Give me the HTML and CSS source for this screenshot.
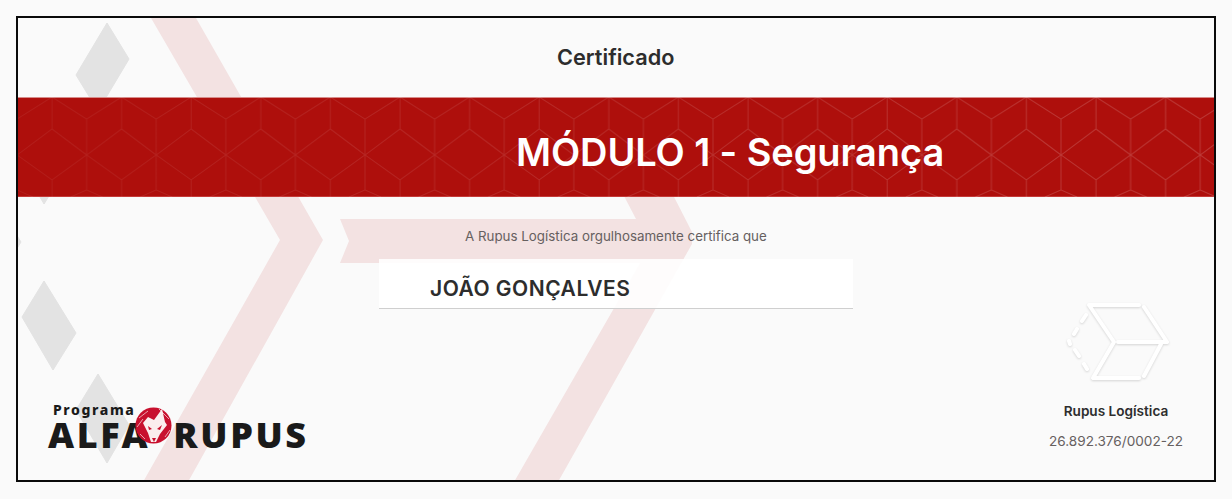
FILE: index.html
```html
<!DOCTYPE html>
<html lang="pt-BR">
<head>
    <meta charset="UTF-8">
    <meta name="viewport" content="width=device-width, initial-scale=1.0">
    <title>Certificado</title>
    <link rel="stylesheet" href="styles.css">
</head>
<body>
    <div class="certificate">
        <!-- Formas de fundo -->
        <svg class="backdrop" width="1196" height="462" viewBox="18 18 1196 462">
            <g fill="#e3e3e3" stroke="#e3e3e3" stroke-width="1" stroke-linejoin="round">
                <polygon points="107,23 129,59 98,111 76,75"/>
                <polygon points="35,115 67,167 44,204 13,151"/>
                <polygon points="44,281 76,333 53,370 22,317"/>
                <polygon points="98,374 129,425 107,463 76,410"/>
                <polygon points="-11,190 21,242 -2,279 -33,227"/>
            </g>
            <g fill="#f3e2e2">
                <polygon points="151,18 196,18 323,240 188,482 143,482 280,240"/>
                <polygon points="340,219 636,219 600,150 650,150 692,232 692,244 558,482 514,482 640,263 340,263 349,241"/>
            </g>
        </svg>

        <header class="heading">Certificado</header>

        <div class="banner">
            <svg class="banner-lines" width="1200" height="100">
                <defs>
                    <pattern id="hexes" x="1" width="69.6" height="100" patternUnits="userSpaceOnUse">
                        <path d="M35 0V32L0 58M35 32L69.6 58M35 0L0 22M35 0L69.6 22M0 22V93M69.6 22V93M0 58L35 83L69.6 58M35 83V100M0 93L16 100M69.6 93L53.6 100" fill="none" stroke="#fff" stroke-width="1"/>
                    </pattern>
                    <linearGradient id="fade">
                        <stop offset="0" stop-color="#fff" stop-opacity="0.06"/>
                        <stop offset="1" stop-color="#fff" stop-opacity="0.18"/>
                    </linearGradient>
                    <mask id="fadeMask">
                        <rect width="1200" height="100" fill="url(#fade)"/>
                    </mask>
                </defs>
                <rect width="1200" height="100" fill="url(#hexes)" mask="url(#fadeMask)"/>
            </svg>
            <h1 class="banner-title">MÓDULO 1 - Segurança</h1>
        </div>

        <div class="recipient">
            <p class="lead">A Rupus Logística orgulhosamente certifica que</p>
            <div class="name-box">JOÃO GONÇALVES</div>
        </div>

        <footer class="footer">
            <div class="program">
                <div class="program-small">Programa</div>
                <div class="program-big"><span>ALFA</span><span>RUPUS</span></div>
                <svg class="wolf" width="37" height="37" viewBox="0 0 37 37">
                    <circle cx="18.5" cy="18.5" r="18" fill="#c8102e"/>
                    <path d="M4 11L13 4M2 20L8 12M24 2L34 12M30 30L35 23M5 27L10 32" stroke="#eaa4ae" stroke-width="1" fill="none"/>
                    <path d="M8 16L13 10L19 13L27 2L30 15L32 18L25 27L21 35H16L13 26Z" fill="#fbeeee"/>
                    <path d="M13 19L17 22L14 23ZM27 18L22 22L25 23ZM17 31H21L19 35Z" fill="#c8102e"/>
                </svg>
            </div>
            <div class="company">
                <svg class="cube" width="110" height="85" viewBox="0 0 110 85">
                    <g fill="none" stroke="#fff" stroke-width="4" stroke-linecap="round" stroke-linejoin="round">
                        <path d="M78 5H28L53 42L32 78H78"/>
                        <path d="M83 7L106 42H57M100 44L83 76"/>
                        <path d="M25 15L21 21M16 29L13 34M8 41L9 44M14 50L18 56M23 64L26 69"/>
                    </g>
                </svg>
                <div class="company-name">Rupus Logística</div>
                <div class="company-id">26.892.376/0002-22</div>
            </div>
        </footer>
    </div>
</body>
</html>
```

FILE: styles.css
```css
body {
    margin: 0;
    background: #fafafa;
    font-family: 'Inter', 'Liberation Sans', sans-serif;
    color: #2d2d2d;
}

.certificate {
    position: relative;
    box-sizing: border-box;
    width: 1200px;
    height: 466px;
    margin: 16px;
    border: 2px solid #0a0a0a;
    overflow: hidden;
    display: flex;
    flex-direction: column;
}

.backdrop {
    position: absolute;
    top: 0;
    left: 0;
}

.heading {
    position: relative;
    flex-shrink: 0;
    height: 79px;
    box-sizing: border-box;
    padding: 27px 0 0 539px;
    font-size: 21.7px;
    line-height: 24px;
    font-weight: 600;
}

.banner {
    position: relative;
    flex-shrink: 0;
    box-sizing: border-box;
    height: 100px;
    margin: 0 -2px;
    padding-top: 10px;
    background: #ae0f0c;
    border-top: 1px solid #d78c8a;
    border-bottom: 1px solid #c53a38;
    display: flex;
    align-items: center;
}

.banner-lines {
    position: absolute;
    top: -1px;
    left: 0;
}

.banner-title {
    position: relative;
    margin: 0 0 0 500px;
    color: #fff;
    font-size: 38px;
    line-height: 46px;
    font-weight: 600;
    letter-spacing: -0.1px;
}

.recipient {
    position: relative;
    flex-shrink: 0;
    display: flex;
    flex-direction: column;
}

.lead {
    margin: 30px 0 0 447px;
    font-size: 13.35px;
    line-height: 18px;
    color: #66605f;
}

.name-box {
    box-sizing: border-box;
    width: 474px;
    height: 50px;
    margin: 14px 0 0 361px;
    padding-left: 51px;
    background: rgba(255, 255, 255, 0.9);
    border-bottom: 1px solid #cfcfcf;
    font-size: 21px;
    line-height: 59px;
    font-weight: 600;
    letter-spacing: 0.5px;
}

.footer {
    position: relative;
    flex: 1;
    display: flex;
    justify-content: space-between;
    align-items: flex-end;
    margin-top: -10px;
    padding: 0 28px 27px 30px;
}

.program {
    position: relative;
    margin-bottom: 1px;
    color: #1a1a1a;
    font-family: 'Noto Sans', sans-serif;
    font-weight: 900;
}

.program-small {
    margin-left: 5px;
    font-size: 14px;
    line-height: 16px;
    font-weight: 800;
    letter-spacing: 1.6px;
}

.program-big {
    display: flex;
    gap: 23px;
    font-size: 36px;
    line-height: 34px;
    letter-spacing: 2.6px;
}

.wolf {
    position: absolute;
    left: 87px;
    top: 5px;
}

.company {
    display: flex;
    flex-direction: column;
    align-items: center;
    width: 140px;
    margin-bottom: 3px;
}

.cube {
    filter: drop-shadow(0 1px 1px rgba(0, 0, 0, 0.15));
}

.company-name {
    margin-top: 17px;
    font-size: 13.6px;
    line-height: 18px;
    font-weight: 600;
}

.company-id {
    margin-top: 12px;
    font-size: 13.6px;
    line-height: 18px;
    color: #66605f;
    white-space: nowrap;
}
```
